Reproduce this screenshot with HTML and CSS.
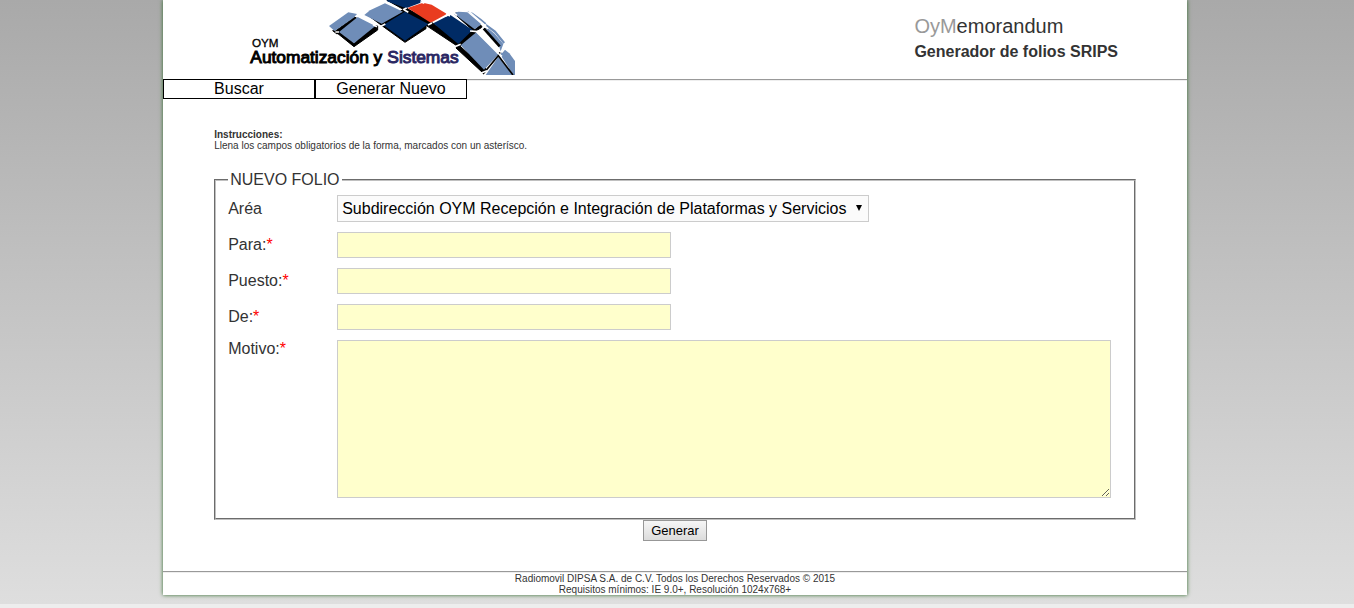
FILE: index.html
```html
<!DOCTYPE html>
<html lang="es">
<head>
<meta charset="utf-8">
<title>OyMemorandum</title>
<link rel="stylesheet" href="styles.css">
</head>
<body>
<div class="page">
  <header class="header">
    <svg class="logo" viewBox="0 0 825 225" role="img" aria-label="OYM Automatización y Sistemas">
      <g fill="#000" stroke="#000" stroke-width="3">
        <path d="M278 92L291 102L354 57L344 51L286 93Z"/>
        <path d="M290 98L342 140L413 90V78L404 77L342 130L298 96Z"/>
        <path d="M384 46L430 80L495 127L558 86V76L650 137L662 127L570 64L495 22L440 0L490 28L425 70Z"/>
        <path d="M655 134L648 144L728 218L738 207Z"/>
        <path d="M652 131L692 92L710 98L662 138Z"/>
        <path d="M643 41L703 95L727 82L722 75L705 88L648 38Z"/>
      </g>
      <g fill="#6f8db8">
        <path d="M267 78L325 37L351 42L341 53L284 93Z"/>
        <path d="M297 96L353 51L406 78L342 130Z"/>
        <path d="M373 45L390 31L435 10L489 35L425 71Z"/>
        <path d="M640 40L655 35L682 37L724 73L704 88Z"/>
        <path d="M682 34L698 38L724 57L739 70L735 74L710 54Z"/>
        <path d="M739 72L767 92L795 127L790 131L764 99L737 78Z"/>
        <path d="M740 82L764 101L790 132L782 154L777 139L733 88Z"/>
        <path d="M662 136L709 97L776 163L732 209Z"/>
        <path d="M737 225L775 170L818 225Z"/>
        <path d="M781 164L791 146L808 160L825 183V225H820Z"/>
      </g>
      <g fill="#002b65">
        <path d="M443 0H541L546 7L498 25L441 4Z"/>
        <path d="M430 75L495 35L565 72L495 122Z"/>
        <path d="M580 70L630 44L698 90L655 132Z"/>
      </g>
      <path fill="#e93c20" d="M503 24L549 8L575 14L621 42L572 68Z"/>
      <path fill="#fff" d="M707 96L724 86L739 88L778 143V162L769 158Z"/>
      <path fill="none" stroke="#000" stroke-width="8" d="M731 85L779 139"/>
      <path fill="none" stroke="#000" stroke-width="5" d="M780 157L774 168L729 222M774 166L819 225"/>
      <path fill="none" stroke="#fff" stroke-width="5" d="M423 79L436 72M411 80L399 74M489 29L500 24M541 5L553 10M493 30L505 37M564 75L576 69M618 41L630 48M615 49L646 36M637 36L651 46M648 139L662 133M690 93L715 95M687 35L736 77L723 89M785 157L797 143M723 70L744 86M286 96L297 96M724 219L741 212M771 158L786 169"/>
      <text class="logo-text" x="36" y="142" font-size="35">OYM</text>
      <text class="logo-text logo-bold" x="31" y="189" font-size="52">Automatización y</text>
      <text class="logo-text logo-bold logo-blue" x="442" y="189" font-size="52">Sistemas</text>
    </svg>
    <div class="brand">
      <h1 class="brand-name"><span class="brand-muted">OyM</span>emorandum</h1>
      <p class="brand-sub">Generador de folios SRIPS</p>
    </div>
  </header>
  <nav class="nav">
    <a class="nav-link" href="#buscar">Buscar</a>
    <a class="nav-link" href="#nuevo">Generar Nuevo</a>
  </nav>
  <main class="content">
    <p class="help"><strong>Instrucciones:</strong><br>Llena los campos obligatorios de la forma, marcados con un asterísco.</p>
    <form>
      <fieldset class="folio">
        <legend class="folio-title">NUEVO FOLIO</legend>
        <div class="fields">
          <label for="area">Aréa</label>
          <div class="select-wrap">
            <select class="control select" id="area">
              <option>Subdirección OYM Recepción e Integración de Plataformas y Servicios</option>
            </select>
            <svg class="arrow" viewBox="0 0 6 6" aria-hidden="true"><path d="M0 0H6L3 6Z"/></svg>
          </div>
          <label for="para">Para:<span class="required">*</span></label>
          <input class="control text" id="para" type="text" required>
          <label for="puesto">Puesto:<span class="required">*</span></label>
          <input class="control text" id="puesto" type="text" required>
          <label for="de">De:<span class="required">*</span></label>
          <input class="control text" id="de" type="text" required>
          <label class="label-top" for="motivo">Motivo:<span class="required">*</span></label>
          <textarea class="control area" id="motivo" required></textarea>
        </div>
      </fieldset>
      <div class="actions"><button class="submit" type="submit">Generar</button></div>
    </form>
  </main>
  <footer class="footer">Radiomovil DIPSA S.A. de C.V. Todos los Derechos Reservados © 2015<br>Requisitos mínimos: IE 9.0+, Resolución 1024x768+</footer>
</div>
</body>
</html>
```
FILE: styles.css
```css
* { box-sizing: border-box; }
html { background: #ededed; }
body {
  margin: 0;
  padding: 0 4px 9px 0;
  background: linear-gradient(#a9a9a9, #dedede);
  color: #333;
  font: 16px/18px "Liberation Sans", Arial, sans-serif;
}
.page {
  max-width: 1024px;
  margin: 0 auto;
  background: #fff;
  box-shadow: 0 0 4px #2f6b2a;
}
.header {
  display: flex;
  justify-content: space-between;
  align-items: flex-start;
  padding: 0 69px 4px 77px;
}
.logo { width: 275px; height: 75px; flex: none; }
.logo-text { font-family: "Liberation Sans", Arial, sans-serif; fill: #000; stroke: #000; stroke-width: 1; }
.logo-bold { stroke-width: 3; }
.logo-blue { fill: #2b2763; stroke: #2b2763; }
.brand { padding-top: 15px; }
.brand-name { margin: 0; font-size: 20px; line-height: 22px; font-weight: 400; }
.brand-muted { color: #999; }
.brand-sub { margin: 6px 0 0; font-weight: 700; }
.nav { display: flex; border-top: 1px solid #999; box-shadow: inset 0 1px #eee; }
.nav-link {
  width: 152px;
  margin-top: -1px;
  border: 1px solid #000;
  background: #fff;
  color: #000;
  text-align: center;
  text-decoration: none;
}
.content { padding: 30px 5%; }
.help { margin: 0 0 20px; font-size: 10px; line-height: 11px; }
.folio { margin: 0; padding: 6px 12px 20px; border: 2px groove #c0c0c0; min-width: 0; }
.folio-title { padding: 0 2px; }
.fields {
  display: grid;
  grid-template-columns: 99px minmax(0, 1fr);
  gap: 10px;
  align-items: center;
  padding-right: 11px;
}
.required { color: #f00; }
.label-top { align-self: start; }
.control { border: 1px solid #ccc; border-radius: 0; font: inherit; color: #000; margin: 0; }
.select-wrap { position: relative; justify-self: start; max-width: 100%; }
.select {
  display: block;
  max-width: 100%;
  height: 27px;
  padding: 0 21px 0 4px;
  appearance: none;
  background: #fbfbfb;
}
.arrow { position: absolute; right: 7px; top: 10px; width: 6px; height: 6px; pointer-events: none; }
.text { width: 334px; max-width: 100%; height: 26px; padding: 3px; background: #ffc; }
.area { display: block; width: 100%; height: 158px; padding: 2px; background: #ffc; resize: both; }
.actions { display: flex; justify-content: center; }
.submit {
  padding: 2px 7px;
  border: 1px solid #979797;
  border-radius: 0;
  background: linear-gradient(#f6f6f6, #dcdcdc);
  color: #000;
  font: 13px/15px "Liberation Sans", Arial, sans-serif;
}
.footer {
  padding-top: 1px;
  border-top: 1px solid #999;
  box-shadow: inset 0 1px #eee;
  text-align: center;
  font-size: 10px;
  line-height: 11px;
}
```
